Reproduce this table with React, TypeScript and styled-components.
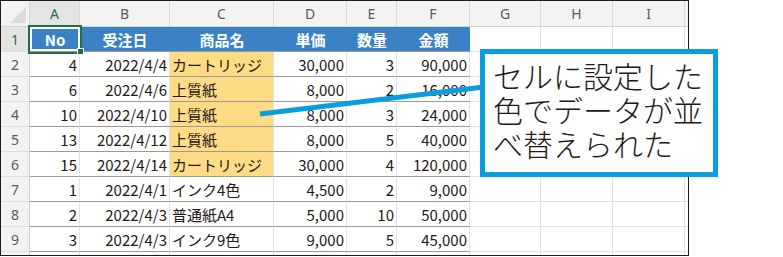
import React from 'react';
import styled, { createGlobalStyle, css } from 'styled-components';

const GlobalStyle = createGlobalStyle`
  body {
    margin: 0;
    background: #ffffff;
    font-family: 'Noto Sans CJK JP', 'Noto Sans', sans-serif;
  }
`;

const colWidths = [29, 50, 90, 104, 73, 50, 73, 71, 72, 72, 4];
const letters = ['A', 'B', 'C', 'D', 'E', 'F', 'G', 'H', 'I', ''];

type Row = { no: number; date: string; name: string; price: string; qty: number; total: string; marked?: boolean };

const rows: Row[] = [
  { no: 4, date: '2022/4/4', name: 'カートリッジ', price: '30,000', qty: 3, total: '90,000', marked: true },
  { no: 6, date: '2022/4/6', name: '上質紙', price: '8,000', qty: 2, total: '16,000', marked: true },
  { no: 10, date: '2022/4/10', name: '上質紙', price: '8,000', qty: 3, total: '24,000', marked: true },
  { no: 13, date: '2022/4/12', name: '上質紙', price: '8,000', qty: 5, total: '40,000', marked: true },
  { no: 15, date: '2022/4/14', name: 'カートリッジ', price: '30,000', qty: 4, total: '120,000', marked: true },
  { no: 1, date: '2022/4/1', name: 'インク4色', price: '4,500', qty: 2, total: '9,000' },
  { no: 2, date: '2022/4/3', name: '普通紙A4', price: '5,000', qty: 10, total: '50,000' },
  { no: 3, date: '2022/4/3', name: 'インク9色', price: '9,000', qty: 5, total: '45,000' },
];

const headers = ['No', '受注日', '商品名', '単価', '数量', '金額'];
const calloutLines = ['セルに設定した', '色でデータが並', 'べ替えられた'];

export default function App() {
  return (
    <>
      <GlobalStyle />
      <Sheet>
        <Grid>
          <Corner />
          {letters.map((l, i) => (
            <ColHeader key={i} active={i === 0}>
              {l}
            </ColHeader>
          ))}

          <RowHeader active>1</RowHeader>
          {headers.map((h, i) => (
            <TitleCell key={h} selected={i === 0}>
              {h}
            </TitleCell>
          ))}
          <Blank />
          <Blank />
          <Blank />
          <Blank />

          {rows.map((r, i) => (
            <React.Fragment key={i}>
              <RowHeader>{i + 2}</RowHeader>
              <Cell align="right">{r.no}</Cell>
              <Cell align="right">{r.date}</Cell>
              <Cell marked={r.marked}>{r.name}</Cell>
              <Cell align="right">{r.price}</Cell>
              <Cell align="right">{r.qty}</Cell>
              <Cell align="right">{r.total}</Cell>
              <Blank />
              <Blank />
              <Blank />
              <Blank />
            </React.Fragment>
          ))}

          <RowHeader />
          {Array.from({ length: 10 }).map((_, i) => (
            <Blank key={i} />
          ))}
        </Grid>

        <Pointer viewBox="0 0 783 257" width="783" height="257">
          <line x1="260" y1="114" x2="484" y2="87" stroke="#0a9ede" strokeWidth="5" />
        </Pointer>

        <Callout>
          {calloutLines.map((t) => (
            <CalloutLine key={t}>{t}</CalloutLine>
          ))}
        </Callout>
      </Sheet>
    </>
  );
}

const Sheet = styled.div`
  position: relative;
  width: 783px;
  height: 257px;
  overflow: hidden;
`;

const Grid = styled.div`
  display: grid;
  grid-template-columns: ${colWidths.map((w) => `${w}px`).join(' ')};
  grid-template-rows: 26px repeat(9, 25px) 4px;
  width: 689px;
  height: 256px;
  box-sizing: border-box;
  border: 1px solid #231815;
  overflow: hidden;
  background: #fff;
`;

const Corner = styled.div`
  position: relative;
  background: #f3f3f3;
  border-right: 1px solid #d4d4d4;
  border-bottom: 1px solid #d4d4d4;

  &::after {
    content: '';
    position: absolute;
    right: 3px;
    bottom: 3px;
    border-left: 16px solid transparent;
    border-bottom: 16px solid #dcdcdc;
  }
`;

const ColHeader = styled.div<{ active?: boolean }>`
  display: flex;
  align-items: center;
  justify-content: center;
  font-family: 'Noto Sans', 'Liberation Sans', sans-serif;
  font-size: 14px;
  color: #5a5a5a;
  background: #f3f3f3;
  border-right: 1px solid #dadada;
  border-bottom: 1px solid #d4d4d4;

  ${({ active }) =>
    active &&
    css`
      background: #e4e4e4;
      color: #217346;
    `}
`;

const RowHeader = styled.div<{ active?: boolean }>`
  display: flex;
  align-items: center;
  justify-content: center;
  font-family: 'Noto Sans', 'Liberation Sans', sans-serif;
  font-size: 14px;
  color: #5a5a5a;
  background: #f3f3f3;
  border-right: 1px solid #cfcfcf;
  border-bottom: 1px solid #dedede;

  ${({ active }) =>
    active &&
    css`
      background: #e4e4e4;
      color: #217346;
    `}
`;

const TitleCell = styled.div<{ selected?: boolean }>`
  position: relative;
  display: flex;
  align-items: center;
  justify-content: center;
  background: #3a82c4;
  color: #ffffff;
  font-weight: 700;
  font-size: 15px;
  border-bottom: 1px solid #9a9a9a;

  ${({ selected }) =>
    selected &&
    css`
      box-shadow: inset 0 0 0 2px #ffffff, 0 0 0 2px #1e7145;
      z-index: 1;

      &::after {
        content: '';
        position: absolute;
        right: -4px;
        bottom: -4px;
        width: 5px;
        height: 5px;
        background: #1e7145;
        border: 1px solid #fff;
      }
    `}
`;

const Cell = styled.div<{ align?: 'left' | 'right'; marked?: boolean }>`
  display: flex;
  align-items: center;
  justify-content: ${({ align }) => (align === 'right' ? 'flex-end' : 'flex-start')};
  padding: 0 2px;
  font-size: 15px;
  color: #231815;
  white-space: nowrap;
  background: ${({ marked }) => (marked ? '#fddc85' : '#ffffff')};
  border-right: 1px solid #e2e2e2;
  border-bottom: 1px solid #9a9a9a;
`;

const Blank = styled.div`
  border-right: 1px solid #e2e2e2;
  border-bottom: 1px solid #e2e2e2;
`;

const Pointer = styled.svg`
  position: absolute;
  left: 0;
  top: 0;
  pointer-events: none;
`;

const Callout = styled.div`
  position: absolute;
  left: 480px;
  top: 49px;
  width: 238px;
  height: 128px;
  box-sizing: border-box;
  border: 5px solid #0a9ede;
  background: #ffffff;
  padding: 4px 0 0 8px;
  display: flex;
  flex-direction: column;
`;

const CalloutLine = styled.div`
  height: 34px;
  font-size: 30px;
  font-weight: 300;
  line-height: 34px;
  color: #231815;
  white-space: nowrap;
`;
